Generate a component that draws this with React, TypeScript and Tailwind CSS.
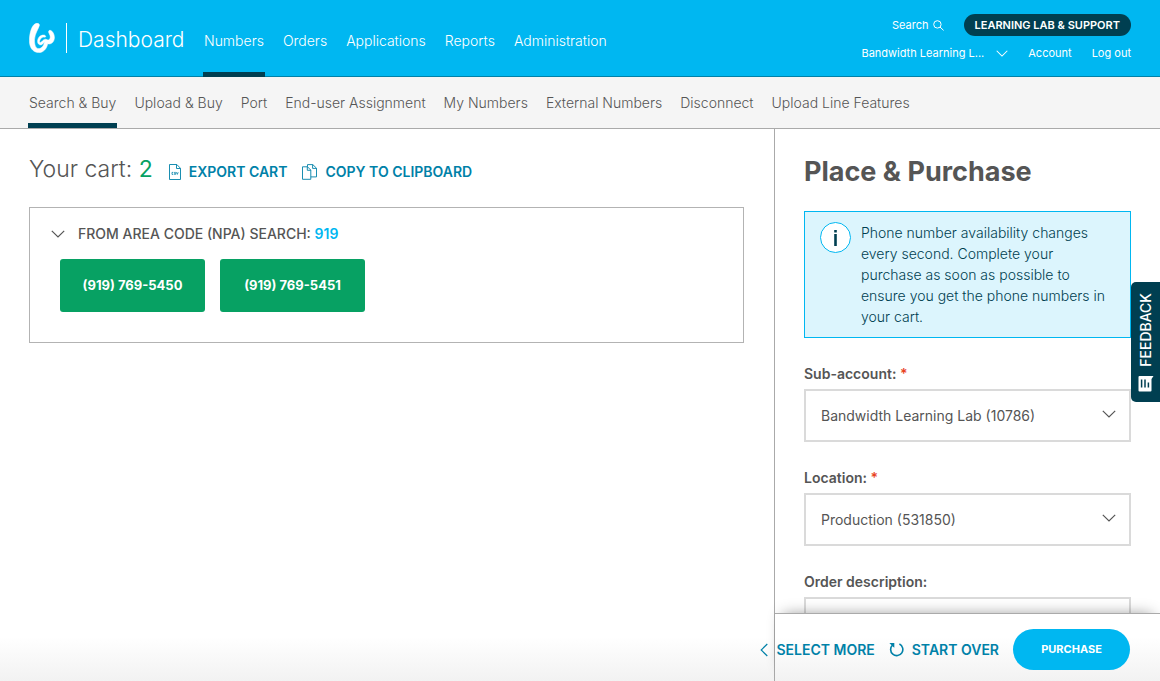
import { useState, type ReactNode } from "react";

const NAV = ["Numbers", "Orders", "Applications", "Reports", "Administration"];
const SUB_NAV = [
  "Search & Buy",
  "Upload & Buy",
  "Port",
  "End-user Assignment",
  "My Numbers",
  "External Numbers",
  "Disconnect",
  "Upload Line Features",
];
const CART = ["(919) 769-5450", "(919) 769-5451"];

function Chevron({ className }: { className?: string }) {
  return (
    <svg viewBox="0 0 14 8" fill="none" stroke="currentColor" strokeWidth="1.2" className={className} aria-hidden="true">
      <path d="M0.8 0.8 7 7 13.2 0.8" />
    </svg>
  );
}

function Logo() {
  return (
    <svg viewBox="0 0 26 30" className="h-[30px] w-[26px]" aria-hidden="true">
      <path
        d="M6.8 0.5C8.8 0 10.7 0.7 10.4 2.4C9.6 5.4 5.9 10.5 5.5 16.5C5.3 21.2 6.6 25.4 9.4 25.6C12.6 25.8 15 22.4 15.5 18.8C14.1 20.8 12.8 22.4 10.8 21.8C7.8 20.8 8.1 16.4 10.2 13.9C12 11.8 15.8 11.4 16.6 13C17 13.9 16.2 14.4 15.6 14.2C13.6 13.6 10.8 15.8 10.6 18.4C10.5 20.2 12 19.6 13.4 18C14.6 16.6 16.4 15.6 17.6 16.6C20.4 18 21.9 15.4 20.9 12.2C20.3 10.6 19.4 9.6 19.6 8.4C19.9 7 21.6 7 22.9 8.2C25.1 10.3 26.2 14.4 24.8 17.6C23.7 20.3 21.2 21.5 18.7 20.8C17.8 26 14 29.9 9.4 29.6C3.6 29.2 0.4 24.4 0.4 17.6C0.4 10.4 2.8 1.8 6.8 0.5Z"
        fill="#fff"
        stroke="#fff"
        strokeWidth="0.5"
        strokeLinejoin="round"
      />
    </svg>
  );
}

function TextButton({ icon, children }: { icon: ReactNode; children: ReactNode }) {
  return (
    <button type="button" className="flex shrink-0 items-center gap-2 text-sm leading-5 font-semibold whitespace-nowrap text-[#0081a8]">
      {icon}
      {children}
    </button>
  );
}

function SelectField({ id, label, value }: { id: string; label: string; value: string }) {
  return (
    <div className="mb-6">
      <label htmlFor={id} className="block text-sm leading-6 font-semibold">
        {label} <span className="text-[#e8431f]">*</span>
      </label>
      <div className="relative mt-[3px]">
        <select id={id} className="block h-[53px] w-full appearance-none border-2 border-[#dadada] bg-white px-[15px] text-sm text-[#555]">
          <option>{value}</option>
        </select>
        <Chevron className="pointer-events-none absolute top-[21px] right-[15px] h-2 w-3.5" />
      </div>
    </div>
  );
}

export default function App() {
  const [open, setOpen] = useState(true);
  return (
    <div className="relative flex h-screen flex-col overflow-hidden bg-white font-['Inter',sans-serif] text-[#555]">
      <header className="flex h-[77px] shrink-0 justify-between border-b border-[#0081a8] bg-[#00b7f1] px-[29px] text-white">
        <div className="flex">
          <div className="flex items-center">
            <Logo />
            <span className="ml-[11px] h-[30px] w-px bg-white" />
            <span className="ml-[11px] w-[105px] pt-1 text-[21px] font-light">Dashboard</span>
          </div>
          <nav className="ml-5 flex gap-[17px]" aria-label="Main">
            {NAV.map((item, i) => (
              <a
                key={item}
                href="#"
                className={
                  i === 0
                    ? "-mb-px border-b-[5px] border-[#003f51] px-px pt-[31px] text-sm leading-5 font-light"
                    : "px-px pt-[31px] text-sm leading-5 font-light"
                }
              >
                {item}
              </a>
            ))}
          </nav>
        </div>
        <div className="flex flex-col items-end pt-3.5 text-[11px]">
          <div className="flex items-center gap-5">
            <a href="#" className="flex items-center gap-1">
              Search
              <svg viewBox="0 0 11 11" fill="none" stroke="currentColor" strokeWidth="1" className="size-[11px]" aria-hidden="true">
                <circle cx="4.4" cy="4.4" r="3.7" />
                <path d="m7 7 3.6 3.4" />
              </svg>
            </a>
            <a href="#" className="rounded-full bg-[#003f51] px-[11px] leading-[22px] font-semibold">
              LEARNING LAB &amp; SUPPORT
            </a>
          </div>
          <div className="mt-[9px] flex items-center gap-5">
            <button type="button" className="flex items-center gap-3">
              Bandwidth Learning L...
              <Chevron className="h-[7px] w-3" />
            </button>
            <a href="#">Account</a>
            <a href="#">Log out</a>
          </div>
        </div>
      </header>

      <nav className="flex h-[52px] shrink-0 gap-4 border-b border-[#aaa] bg-[#f5f5f5] px-7" aria-label="Numbers">
        {SUB_NAV.map((item, i) => (
          <a
            key={item}
            href="#"
            className={
              i === 0
                ? "border-b-[5px] border-[#003f51] px-px pt-4 text-sm leading-5 font-light whitespace-nowrap"
                : "px-px pt-4 text-sm leading-5 font-light whitespace-nowrap"
            }
          >
            {item}
          </a>
        ))}
      </nav>

      <div className="flex min-h-0 flex-1">
        <main className="min-w-0 flex-1 bg-[linear-gradient(to_top,#f2f2f2,#fff_44px)] px-[29px] pt-6 pr-[30px]">
          <div className="flex items-center">
            <h1 className="text-[23px] leading-8 font-light">
              Your cart: <span className="font-normal text-[#07a163]">2</span>
            </h1>
            <div className="mt-[6px] ml-4 flex gap-[15px]">
              <TextButton
                icon={
                  <svg viewBox="0 0 12 16" fill="none" stroke="currentColor" className="h-4 w-3" aria-hidden="true">
                    <path d="M.5.5h7.3l3.7 3.8v11.2H.5zM7.5.5v4h4" strokeWidth=".9" />
                    <path d="M4.3 8.4H3v2h1.3M6.8 8.4H5.5v1h1v1H5.2M7.4 8.2l.9 2.2.9-2.2" strokeWidth=".8" />
                  </svg>
                }
              >
                EXPORT CART
              </TextButton>
              <TextButton
                icon={
                  <svg viewBox="0 0 15 16" fill="none" stroke="currentColor" strokeWidth=".9" className="h-4 w-[15px]" aria-hidden="true">
                    <path d="M.5 2.8h5l3.3 3.3v9.2H.5zM5.3 2.8v3.5h3.5" />
                    <path d="M5.5 2.8V.6h5.3l3.7 3.6v8.7H8.8M10.6.6v3.8h3.9" />
                  </svg>
                }
              >
                COPY TO CLIPBOARD
              </TextButton>
            </div>
          </div>

          <section className="mt-[22px] border border-[#b3b3b3] bg-white px-[21px] pt-4 pb-[30px]">
            <button
              type="button"
              aria-expanded={open}
              onClick={() => setOpen(!open)}
              className="flex items-center gap-[13px] text-sm leading-5 font-medium"
            >
              <Chevron className="h-2 w-3.5" />
              <span>
                FROM AREA CODE (NPA) SEARCH: <span className="font-semibold text-[#00b7f1]">919</span>
              </span>
            </button>
            {open && (
              <div className="mt-[15px] ml-[9px] flex gap-[15px]">
                {CART.map((number) => (
                  <button key={number} type="button" className="h-[53px] w-[145px] rounded-[3px] bg-[#07a163] text-[13px] font-bold text-white">
                    {number}
                  </button>
                ))}
              </div>
            )}
          </section>
        </main>

        <aside className="flex w-[386px] shrink-0 flex-col border-l border-[#aaa]">
          <div className="min-h-0 flex-1 overflow-hidden px-[29px] pt-6">
            <h2 className="text-[27px] leading-[38px] font-bold">Place &amp; Purchase</h2>
            <div className="mt-5 flex gap-2.5 border border-[#00b7f1] bg-[#dcf5fd] py-[10px] pr-5 pl-[15px] text-[#003f51]">
              <svg viewBox="0 0 31 31" className="size-[31px] shrink-0" aria-hidden="true">
                <circle cx="15.5" cy="15.5" r="15" fill="#fff" stroke="#00b7f1" />
                <path d="M14.2 12h2.6v12h-2.6zM14.2 8h2.6v2.4h-2.6z" fill="#003f51" />
              </svg>
              <p className="text-sm leading-[21px] font-light">
                Phone number availability changes every second. Complete your purchase as soon as possible to ensure you get the phone numbers in your cart.
              </p>
            </div>
            <form className="mt-6">
              <SelectField id="sub-account" label="Sub-account:" value="Bandwidth Learning Lab (10786)" />
              <SelectField id="location" label="Location:" value="Production (531850)" />
              <label htmlFor="description" className="block text-sm leading-6 font-semibold">
                Order description:
              </label>
              <input id="description" type="text" className="mt-[3px] h-[53px] w-full border-2 border-[#dadada] px-[15px] text-sm" />
            </form>
          </div>
          <footer className="relative flex h-[68px] shrink-0 items-center justify-end gap-[14px] border-t border-[#aaa] bg-[linear-gradient(to_top,#f2f2f2,#fff_44px)] pt-1 pr-[30px] shadow-[0_-6px_14px_-8px_rgba(0,0,0,0.45)]">
            <TextButton
              icon={
                <svg viewBox="0 0 8 14" fill="none" stroke="currentColor" strokeWidth="1.2" className="h-3.5 w-2" aria-hidden="true">
                  <path d="M7.3 1 1.2 7l6.1 6" />
                </svg>
              }
            >
              SELECT MORE
            </TextButton>
            <TextButton
              icon={
                <svg viewBox="0 0 15 15" fill="none" stroke="currentColor" strokeWidth="1.6" className="size-[15px]" aria-hidden="true">
                  <path d="M10.4 2A6.1 6.1 0 1 1 3.6 3" />
                  <path d="M.4.9h4.9v4.9L3.6 4.2z" fill="currentColor" stroke="none" />
                </svg>
              }
            >
              START OVER
            </TextButton>
            <button type="button" className="h-[41px] w-[117px] shrink-0 rounded-full bg-[#00b7f1] text-[11px] font-bold text-white">
              PURCHASE
            </button>
          </footer>
        </aside>
      </div>

      <button
        type="button"
        className="absolute top-[282px] right-0 flex h-[120px] w-[29px] flex-col items-center justify-end gap-2 rounded-l-[5px] bg-[#003f51] pb-2.5 text-white"
      >
        <span className="rotate-180 text-sm leading-4 font-medium [writing-mode:vertical-rl]">FEEDBACK</span>
        <svg viewBox="0 0 16 17" className="h-[17px] w-4" aria-hidden="true">
          <path d="M1.5 1H15.5L13.5 4V15.5Q13.5 16.5 12.5 16.5H1.5Q.5 16.5 .5 15.5V2Q.5 1 1.5 1Z" fill="#fff" />
          <path d="M3.6 4.5v8M7 4.5v8M10.4 7.5v5" stroke="#003f51" strokeWidth="1.5" />
        </svg>
      </button>
    </div>
  );
}
